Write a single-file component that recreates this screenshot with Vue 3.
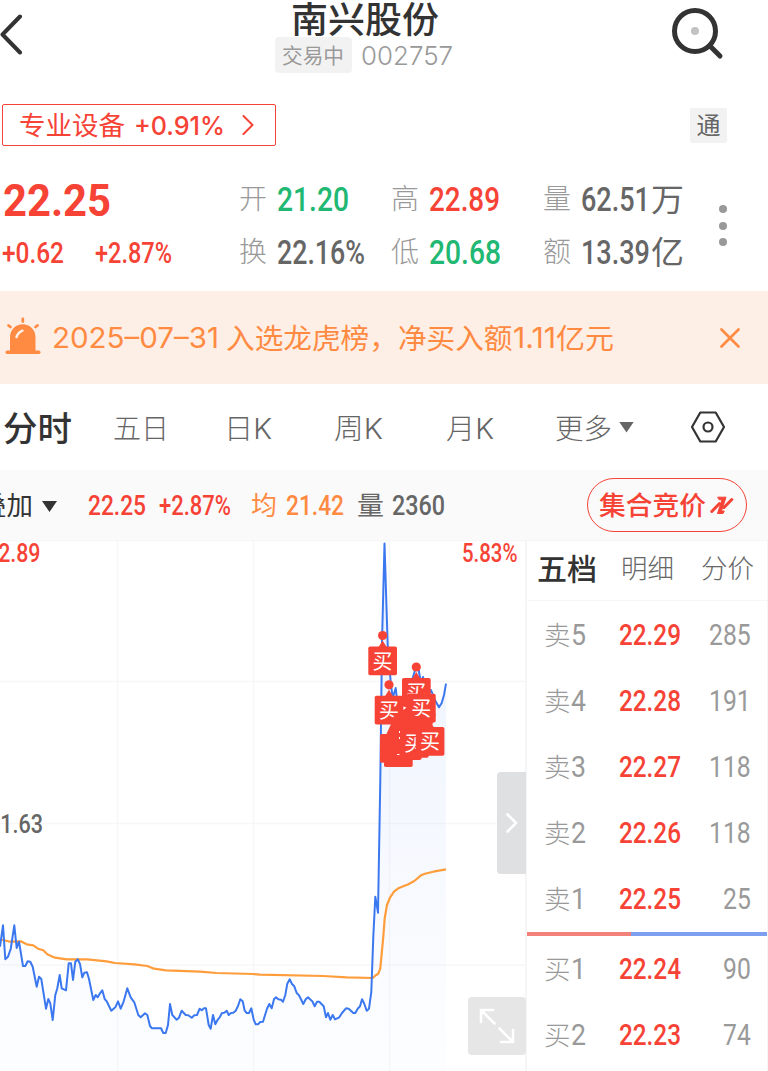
<template>
  <div class="stock-page">
    <header class="header">
      <svg class="back" width="26" height="44" viewBox="0 0 26 44">
        <path d="M20 4.5 L2.5 22.5 L20 40.5" />
      </svg>
      <div class="title-box">
        <h1><Fit t="南兴股份" :w="148" /></h1>
        <div class="sub-title">
          <span class="status"><Fit t="交易中" :w="62" /></span>
          <Fit class="code" t="002757" :w="92" />
        </div>
      </div>
      <svg class="search" width="56" height="56" viewBox="0 0 56 56">
        <circle cx="25" cy="25" r="20.5" />
        <path d="M40 40 L50 50" />
        <circle class="search-dot" cx="25" cy="25" r="4" />
      </svg>
    </header>

    <div class="sector-row">
      <div class="sector">
        <Fit t="专业设备" :w="106" />
        <Fit class="sector-rate" t="+0.91%" :w="91" />
        <svg class="sector-arrow" width="12" height="20" viewBox="0 0 12 20">
          <path d="M1.5 1 L10.5 10 L1.5 19" />
        </svg>
      </div>
      <span class="tag">通</span>
    </div>

    <section class="quote">
      <div class="price-box">
        <Fit class="price" t="22.25" :w="108" />
        <div class="change">
          <Fit t="+0.62" :w="62" />
          <Fit t="+2.87%" :w="77" />
        </div>
      </div>
      <div class="stats">
        <div v-for="item in stats" :key="item.label" class="stat">
          <Fit class="stat-label" :t="item.label" :w="28" />
          <Fit :class="['stat-value', item.color]" :t="item.value" :w="item.w" />
          <Fit v-if="item.unit" class="stat-unit" :t="item.unit" :w="33" />
        </div>
      </div>
      <div class="more-dots"><i></i><i></i><i></i></div>
    </section>

    <div class="notice">
      <svg class="alarm" width="36" height="38" viewBox="0 0 36 38">
        <path class="fill" d="M5 34 V20 A12.7 12.7 0 0 1 30.5 20 V34 Z" />
        <rect class="fill" x="0.5" y="33.5" width="35" height="3.5" rx="1.7" />
        <path class="ray" d="M17.8 2 V4.5 M3.5 8.5 L5.5 10 M32.5 8.5 L30.5 10" />
        <path class="shine" d="M11.5 20 Q13 15.5 17.5 13.7" />
      </svg>
      <Fit class="notice-date" t="2025–07–31" :w="167" />
      <Fit class="notice-text" t="入选龙虎榜，净买入额" :w="286.5" />
      <Fit class="notice-num" t="1.11" :w="43" />
      <Fit class="notice-unit" t="亿元" :w="58" />
      <svg class="close" width="20" height="20" viewBox="0 0 20 20">
        <path d="M1.5 1.5 L18.5 18.5 M18.5 1.5 L1.5 18.5" />
      </svg>
    </div>

    <nav class="tabs">
      <Fit class="tab active" t="分时" :w="69" />
      <Fit class="tab tab-day5" t="五日" :w="56" />
      <Fit class="tab tab-day" t="日K" :w="48" />
      <Fit class="tab tab-week" t="周K" :w="49" />
      <Fit class="tab tab-month" t="月K" :w="48" />
      <Fit class="tab tab-more" t="更多" :w="57" />
      <i class="triangle"></i>
      <svg class="setting" width="36" height="32" viewBox="0 0 36 32">
        <path d="M10.3 1.5 H25.7 L34 16 L25.7 30.5 H10.3 L2 16 Z" />
        <circle cx="18" cy="16" r="4.5" />
      </svg>
    </nav>

    <div class="info-bar">
      <Fit class="overlay" t="叠加" :w="53" />
      <i class="triangle dark"></i>
      <Fit class="num red info-price" t="22.25" :w="58" />
      <Fit class="num red info-rate" t="+2.87%" :w="72" />
      <Fit class="avg-label" t="均" :w="26" />
      <Fit class="num orange info-avg" t="21.42" :w="58" />
      <Fit class="vol-label" t="量" :w="27" />
      <Fit class="num info-vol" t="2360" :w="53" />
      <button class="auction">
        <Fit t="集合竞价" :w="107" />
        <svg width="24" height="19" viewBox="0 0 24 19">
          <path class="slash" d="M1.8 15.5 L9.5 7.5 M14 11.5 L21.8 3.5" />
          <path class="bolt" d="M8 1.2 H16 L11.5 15 H14.3 L13 17.5 H7.500 L12 3.8 H9.500 Z" />
        </svg>
      </button>
    </div>

    <main class="main">
      <div class="chart">
        <svg width="526" height="531" viewBox="0 540 526 531">
          <defs>
            <linearGradient id="area" x1="0" y1="540" x2="0" y2="1071" gradientUnits="userSpaceOnUse">
              <stop offset="0" stop-color="#3b78f0" stop-opacity="0.10" />
              <stop offset="1" stop-color="#3b78f0" stop-opacity="0.01" />
            </linearGradient>
          </defs>
          <path class="grid" d="M0 540.5 H526 M0 681.5 H526 M0 823.5 H526 M0 965 H526 M117.5 540 V1071 M253.5 540 V1071 M389.5 540 V1071 M525.5 540 V1071" />
          <polygon :points="areaPoints" fill="url(#area)" />
          <polyline class="avg-line" :points="avgPoints" />
          <polyline class="price-line" :points="pricePoints" />
          <g class="axis">
            <text class="red" x="-14" y="561.5" textLength="54.5" lengthAdjust="spacingAndGlyphs">22.89</text>
            <text class="red" x="462" y="561.5" textLength="55.5" lengthAdjust="spacingAndGlyphs">5.83%</text>
            <text x="-12" y="832.5" textLength="55" lengthAdjust="spacingAndGlyphs">21.63</text>
          </g>
          <path class="cluster" d="M392 722 L400 714 L436 714 L420 760 H400 L386 735 Z" />
          <g v-for="(m, i) in markers" :key="i" class="marker">
            <circle v-if="m.dot" :cx="m.x + 14.3" :cy="m.y - 11" r="4.6" />
            <path :d="`M${m.x + 10} ${m.y + 1} L${m.x + 14.3} ${m.y - 6} L${m.x + 18.6} ${m.y + 1} Z`" />
            <rect :x="m.x" :y="m.y" width="28.7" height="28.7" rx="1.8" />
            <text v-if="m.text" :x="m.x + 4.3" :y="m.y + 22">买</text>
          </g>
          <path class="speck" d="M403.3 706.5 L406.5 707.5 L403.5 710 Z M399 731 h1 v2 h-1 Z M399 737 h1 v2 h-1 Z M397 754 h2.5 v1 h-2.5 Z" />
        </svg>
        <div class="side-handle">
          <svg width="12" height="20" viewBox="0 0 12 20"><path d="M1.5 1.5 L10 10 L1.5 18.5" /></svg>
        </div>
        <div class="expand">
          <svg width="36" height="36" viewBox="0 0 36 36">
            <path d="M2 14 V2 H14 M2 2 L15.5 15.500 M20.500 20.500 L34 34 M34 22 V34 H22" />
          </svg>
        </div>
      </div>

      <aside class="book">
        <div class="book-tabs">
          <Fit class="book-tab current" t="五档" :w="60" />
          <Fit class="book-tab" t="明细" :w="53" />
          <Fit class="book-tab" t="分价" :w="53" />
        </div>
        <div v-for="row in sells" :key="row.n" class="book-row">
          <Fit class="side" t="卖" :w="26.5" />
          <Fit class="digit" :t="row.n" :w="15" />
          <Fit class="book-price" :t="row.price" :w="62" />
          <Fit class="volume" :t="row.vol" :w="row.vol.length * 13.9" />
        </div>
        <div class="ratio"><i></i></div>
        <div v-for="row in buys" :key="row.n" class="book-row">
          <Fit class="side" t="买" :w="26.5" />
          <Fit class="digit" :t="row.n" :w="15" />
          <Fit class="book-price" :t="row.price" :w="62" />
          <Fit class="volume" :t="row.vol" :w="row.vol.length * 13.9" />
        </div>
      </aside>
    </main>
  </div>
</template>

<script setup>
import { h } from 'vue'

// one line of text set to an exact width
const Fit = (props) =>
  h('svg', { class: 'fit', width: props.w }, [
    h('text', { x: 0, y: '0.86em', textLength: props.w, lengthAdjust: 'spacingAndGlyphs' }, props.t)
  ])
Fit.props = ['t', 'w']

const stats = [
  { label: '开', value: '21.20', w: 72, color: 'green' },
  { label: '高', value: '22.89', w: 71, color: 'red' },
  { label: '量', value: '62.51', w: 69, unit: '万' },
  { label: '换', value: '22.16%', w: 88 },
  { label: '低', value: '20.68', w: 72, color: 'green' },
  { label: '额', value: '13.39', w: 69, unit: '亿' }
]

const sells = [
  { n: '5', price: '22.29', vol: '285' },
  { n: '4', price: '22.28', vol: '191' },
  { n: '3', price: '22.27', vol: '118' },
  { n: '2', price: '22.26', vol: '118' },
  { n: '1', price: '22.25', vol: '25' }
]
const buys = [
  { n: '1', price: '22.24', vol: '90' },
  { n: '2', price: '22.23', vol: '74' }
]

const markers = [
  { x: 368.3, y: 646.5, dot: true, text: true },
  { x: 402, y: 678, dot: true, text: true },
  { x: 391, y: 697 },
  { x: 374.7, y: 695.8, dot: true, text: true },
  { x: 407, y: 693.8, text: true },
  { x: 393, y: 716 },
  { x: 380, y: 734 },
  { x: 384, y: 738.3 },
  { x: 393, y: 731 },
  { x: 400, y: 729, text: true },
  { x: 415.7, y: 727, text: true }
]

const pricePoints = [
  '0,946.7 3,925.3 5.3,959.3 8,956.7 10.7,949 14.3,925.3 16.7,948 19,941.7 23,966 25.3,966 27.7,961.3 30.3,961.7',
  '32.7,966.7 36.7,986.7 39,976.7 41.3,979 46,1008.7 48.3,999 50.3,1003.3 52.7,1020 55.3,995 57.3,988.3 59.7,975',
  '61.7,988.3 66,990.3 68.7,963.3 71,963.3 73,980 75.3,961.7 77.7,959.3 80,964 82.3,977.3 84.3,972.7 87,972.3',
  '89,979 93.3,1000 95.7,995 97.7,997.3 100,993.3 102.3,990.3 104.7,999 106.7,1001.3 111.3,1010.7 115.3,1007.3',
  '118,1001.3 120.7,1008.7 123.7,1001.3 127.3,988.3 130.7,997.3 134.3,1002.3 138.3,1015 140.7,1017.3 145,1013.3',
  '147.3,1015 150,1026 152,1028.3 161,1028.3 163.3,1033 165.7,1033 168,1025 170,1004 172.3,1015 176.7,1019.7',
  '179,1017.7 181.7,1010.7 185.7,1015 188.3,1015.3 191.7,1017.7 194.3,1015.3 197,1015 199.7,1008.7 201.7,1010.3',
  '204,1008.3 206,1008.3 208.7,1025 210.7,1028.7 213,1015 215.3,1024.3 217.7,1019.7 219.7,1017.3 222,1013',
  '224.3,1012.7 226.7,1010.7 228.7,1015 231,1013 233.3,1012.7 235.7,1010.7 238,1006 240.3,999.3 242.7,1001.3',
  '244.7,1010.7 246.7,1013 249,1013 251.3,1008.3 253.7,1019.7 255.7,1024.3 258,1024.3 260.3,1022 263,1021.7',
  '267,1008.7 269.3,1004 271.7,1008.3 274,999.3 276,997.3 278.3,999.3 281,999.7 283,1001.7 285.3,995 287.3,983.7',
  '289.7,979.3 292,984 294.3,986.3 296.7,993 299,995.3 303.3,1004 305.7,999.3 308,997.3 310,999.3 312.3,1001.3',
  '314.7,1006.3 317,1001.7 319.3,1001.7 323.7,1006.3 326,1017.3 328,1013 330.3,1019.7 332.7,1015 335,1019.3',
  '339.3,1017.3 342,1013 346,1008.3 348.7,1008.7 353.3,1013 355.3,1013 357.7,1008.7 360,1006.3 362,999.3',
  '364.3,1003.7 366.7,1010.7 369,1008.7 371.3,992 373.3,936.7 375.3,896.7 378,912.7 380.3,780 382,641.7',
  '384.5,543.5 387.7,645 390.7,682 392.7,698 395.7,688 397.3,702 402,722 408,710 412.7,678 416,667 418.7,670',
  '420.7,682 423,677 427,696 431,690 435.3,700.7 439,707.3 441.7,703 444,695 446,683.7'
].join(' ')

const areaPoints = `${pricePoints} 446,1071 0,1071`

const avgPoints = [
  '0,940 3,940 10,941.7 20.7,941.3 26.7,944.3 33.3,945.3 38,948.7 43.3,950.3 47.3,954.3 55,957.7 66.7,959.3',
  '87.3,959.3 106.7,961.3 115,963 134.3,964.3 147.3,966 154,968.7 166,970.3 200,971.7 216.7,973 253.3,974',
  '260,974.7 323.3,976 346.7,977.3 372.7,978 375.7,975.3 378.3,973.7 380.3,968.3 383.3,936.7 384.7,918.3',
  '387,905 390,897.7 394,891.7 398.3,888.3 408.3,884.3 414.3,881 421,875.3 425,873.8 433.3,871.7 446,869.3'
].join(' ')
</script>

<style>
body {
  background: #fff;
  overflow: hidden;
}
</style>

<style scoped>
.stock-page {
  width: 768px;
  height: 1071px;
  overflow: hidden;
  background: #fff;
  color: #666;
  font-family: Inter, "Noto Sans CJK SC", sans-serif;
}

.fit {
  display: block;
  flex: none;
  height: 1em;
  overflow: visible;
  fill: currentColor;
}

svg {
  flex: none;
}

path {
  stroke-linecap: round;
  stroke-linejoin: round;
}

.red {
  color: #f64336;
  fill: #f64336;
}

.green {
  color: #21b873;
}

.orange {
  color: #ff8a42;
}

.header {
  display: grid;
  grid-template-columns: 200px 329px 239px;
  height: 90px;
}

.back {
  margin-top: 12px;
  fill: none;
  stroke: #333;
  stroke-width: 4;
}

.title-box {
  display: flex;
  flex-direction: column;
  align-items: center;
}

h1 {
  height: 35px;
  margin: 2px 0 0;
  color: #333;
  font-size: 36px;
  font-weight: 500;
}

.sub-title {
  display: flex;
  align-items: center;
  gap: 9px;
  height: 36px;
  margin-right: 2px;
}

.status {
  display: flex;
  align-items: center;
  justify-content: center;
  width: 77px;
  height: 36px;
  border-radius: 4px;
  background: #f2f2f2;
  color: #999;
  font-size: 21px;
}

.code {
  margin-top: 1px;
  color: #999;
  font-size: 26px;
  font-weight: 300;
}

.search {
  margin: 6px 0 0 141px;
  fill: none;
  stroke: #333;
  stroke-width: 5;
}

.search-dot {
  fill: #c2c2c2;
  stroke: none;
}

.sector-row {
  display: flex;
  justify-content: space-between;
  align-items: center;
  height: 70px;
  padding: 0 41px 0 2px;
}

.sector {
  box-sizing: border-box;
  display: flex;
  align-items: center;
  width: 274px;
  height: 42px;
  padding-left: 16px;
  border: 1.5px solid #f64336;
  border-radius: 2px;
  color: #f64336;
  font-size: 26px;
}

.sector .fit {
  margin-top: 1px;
}

.sector .sector-rate {
  margin-left: 9px;
  font-weight: 500;
}

.sector-arrow {
  margin-left: 17px;
  fill: none;
  stroke: #f64336;
  stroke-width: 2;
}

.tag {
  width: 37px;
  height: 35px;
  border-radius: 2px;
  background: #f2f2f2;
  font-size: 24px;
  line-height: 35px;
  text-align: center;
}

.quote {
  display: flex;
  height: 131px;
}

.price-box {
  width: 239px;
  color: #f64336;
  font-family: Roboto, sans-serif;
  font-weight: 500;
}

.price {
  margin: 17px 0 0 3px;
  font-size: 45px;
  font-weight: 700;
}

.change {
  display: flex;
  gap: 31px;
  margin: 16px 0 0 2px;
  font-size: 29px;
}

.stats {
  display: grid;
  grid-template-columns: 152px 152px 160px;
  grid-template-rows: 53px 53px;
  height: 106px;
  margin-top: 12.5px;
}

.stat {
  display: flex;
  align-items: center;
}

.stat-label {
  margin-right: 10px;
  color: #999;
  font-size: 28px;
  font-weight: 300;
}

.stat-value {
  font-family: Roboto, sans-serif;
  font-size: 34px;
  font-weight: 500;
}

.stat-unit {
  margin-left: 1px;
  font-size: 32px;
}

.more-dots {
  display: flex;
  flex-direction: column;
  gap: 8.5px;
  margin: 45px 0 0 16px;
}

.more-dots i {
  width: 8px;
  height: 8px;
  border-radius: 50%;
  background: #999;
}

.notice {
  display: flex;
  align-items: center;
  height: 93px;
  background: #feefe6;
  color: #ff8a42;
  font-size: 28.5px;
}

.alarm {
  margin: -4px 0 0 5px;
}

.fill {
  fill: #ff8a42;
}

.ray {
  fill: none;
  stroke: #ff8a42;
  stroke-width: 2.8;
}

.shine {
  fill: none;
  stroke: #feefe6;
  stroke-width: 2.5;
}

.notice-date {
  margin-left: 11px;
}

.notice-text {
  margin: 2px 0 0 7px;
}

.notice-unit {
  margin-top: 2px;
}

.close {
  margin-left: 106px;
  fill: none;
  stroke: #ff8a42;
  stroke-width: 2.6;
}

.tabs {
  display: flex;
  align-items: center;
  height: 86px;
}

.tab {
  margin-top: 3px;
  font-size: 28px;
  font-weight: 300;
}

.tab.active {
  margin-left: 3px;
  color: #333;
  font-size: 34px;
  font-weight: 500;
}

.tab-day5 {
  margin-left: 41px;
}

.tab-day {
  margin-left: 55px;
}

.tab-week {
  margin-left: 62px;
}

.tab-month {
  margin-left: 63px;
}

.tab-more {
  margin-left: 61px;
}

.triangle {
  flex: none;
  width: 15px;
  height: 11px;
  margin-left: 7px;
  background: #666;
  clip-path: polygon(0 0, 100% 0, 50% 100%);
}

.triangle.dark {
  background: #333;
}

.setting {
  margin-left: 56px;
  fill: none;
  stroke: #333;
  stroke-width: 2.2;
}

.info-bar {
  display: flex;
  align-items: center;
  height: 70px;
  background: #fafafa;
  font-size: 26px;
}

.overlay {
  margin: 2px 0 0 -20px;
  color: #333;
}

.info-bar .triangle {
  margin: 3px 0 0 9px;
}

.num {
  font-family: Roboto, sans-serif;
  font-size: 27.5px;
  font-weight: 500;
}

.num.orange,
.avg-label {
  color: #ff8a42;
}

.info-price {
  margin-left: 31px;
}

.info-rate {
  margin-left: 13px;
}

.avg-label {
  margin: 2px 0 0 20px;
}

.info-avg {
  margin-left: 9px;
}

.vol-label {
  margin: 2px 0 0 13px;
}

.info-vol {
  margin-left: 8px;
}

.auction {
  box-sizing: border-box;
  display: flex;
  align-items: center;
  gap: 4px;
  width: 160px;
  height: 54px;
  margin-left: 142px;
  padding: 0 0 0 11px;
  border: 1.5px solid #f64336;
  border-radius: 27px;
  background: none;
  color: #f64336;
  font-family: inherit;
  font-size: 26px;
  font-weight: 500;
}

.auction .fit {
  margin-top: 2px;
}

.slash {
  fill: none;
  stroke: #f64336;
  stroke-width: 3;
}

.bolt {
  fill: #f64336;
  stroke: #f64336;
  stroke-width: 1;
}

.main {
  display: flex;
  height: 531px;
}

.chart {
  position: relative;
  width: 526px;
  height: 531px;
}

.grid {
  fill: none;
  stroke: #f7f7f8;
  stroke-width: 1.5;
}

.price-line {
  fill: none;
  stroke: #3b78f0;
  stroke-width: 2;
  stroke-linejoin: round;
}

.avg-line {
  fill: none;
  stroke: #ff9d3c;
  stroke-width: 2.2;
  stroke-linejoin: round;
}

.axis {
  fill: #666;
  font-family: Roboto, sans-serif;
  font-size: 25px;
  font-weight: 500;
}

.marker,
.cluster {
  fill: #f64336;
}

.marker text {
  fill: #fff;
  font-size: 20px;
}

.speck {
  fill: #fff;
}

.side-handle {
  position: absolute;
  top: 232px;
  right: 0;
  display: flex;
  align-items: center;
  justify-content: center;
  width: 29px;
  height: 102px;
  border-radius: 4px 0 0 4px;
  background: #dfe0e2;
}

.side-handle path,
.expand path {
  fill: none;
  stroke: #fff;
  stroke-width: 2.6;
}

.expand {
  position: absolute;
  right: 0;
  bottom: 16px;
  display: flex;
  align-items: center;
  justify-content: center;
  width: 58px;
  height: 58px;
  border-radius: 4px;
  background: #e6e6e6;
}

.book {
  box-sizing: border-box;
  width: 242px;
  border: 1px solid #f5f5f5;
  border-width: 1px 1px 0;
}

.book-tabs {
  box-sizing: border-box;
  display: flex;
  align-items: center;
  height: 60px;
  padding: 0 0 3px 9px;
  border-bottom: 1px solid #f5f5f5;
}

.book-tab {
  margin-left: 27px;
  font-size: 26px;
  font-weight: 300;
}

.book-tab.current {
  margin: 0 -3px 0 1px;
  color: #333;
  font-size: 30px;
  font-weight: 500;
}

.book-row {
  box-sizing: border-box;
  display: flex;
  align-items: center;
  height: 66px;
  padding: 1px 16px 0 17px;
}

.side {
  margin-top: 2px;
  color: #999;
  font-size: 26.5px;
  font-weight: 300;
}

.digit,
.book-price,
.volume {
  font-family: Roboto, sans-serif;
  font-size: 29px;
  font-weight: 500;
}

.digit {
  color: #999;
  font-weight: 400;
}

.book-price {
  margin-left: 33.5px;
  color: #f64336;
}

.volume {
  margin-left: auto;
  color: #999;
  font-weight: 400;
}

.ratio {
  height: 4px;
  margin: 1px 0 -1px;
  background: #7d9ff0;
}

.ratio i {
  display: block;
  width: 104px;
  height: 4px;
  background: #f28279;
}
</style>
